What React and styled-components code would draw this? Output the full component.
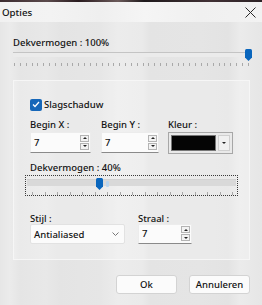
import React from 'react';
import styled, { createGlobalStyle } from 'styled-components';

const Global = createGlobalStyle`
  html, body { margin: 0; padding: 0; }
  body {
    width: 262px; height: 305px; overflow: hidden;
    font-family: "Noto Sans", "Open Sans", sans-serif;
    font-size: 9.5px; font-weight: 500; color: #111;
  }
  * { box-sizing: border-box; }
`;

const Window = styled.div`
  width: 262px; height: 305px;
  display: flex; flex-direction: column;
  background: linear-gradient(90deg,
    #e6e6e6 0px, #ebebeb 10px, #e5e5e5 20px, #e8e8e8 46px, #e4e4e4 60px,
    #e6e6e6 100px, #ececec 118px, #eaeaea 142px, #e4e4e4 150px,
    #e5e5e5 200px, #e3e3e3 228px, #ebebeb 240px, #e6e6e6 262px);
`;

const TopStrip = styled.div`
  height: 2px;
  background: linear-gradient(90deg, #3b2b2f 0, #5b4a4c 18%, #2a1c20 30%, #6b5a5a 45%, #1f1a1c 55%, #403034 80%, #2d2326 100%);
`;

const TitleBar = styled.div`
  height: 20px;
  display: flex; align-items: center; justify-content: space-between;
  padding: 0 6px 0 2px;
  background: linear-gradient(90deg, #f1f1f1 0, #f3f3f3 50px, #efefef 100px, #f5f5f5 145px, #f0f0f0 200px, #f2f2f2 262px);
  font-size: 9.7px; color: #111;
`;

const CloseIcon = styled.svg`
  width: 11px; height: 11px; display: block;
`;

const Body = styled.div`
  flex: 1;
  display: flex; flex-direction: column;
  padding: 0 12px 0 13px;
`;

const Label = styled.div`
  line-height: ${p => p.$lh || 14}px;
  height: ${p => p.$lh || 14}px;
  margin-top: ${p => p.$mt || 0}px;
  white-space: nowrap;
`;

const SliderBox = styled.div`
  position: relative;
  width: ${p => p.$w}px;
  height: ${p => p.$h}px;
  margin-left: ${p => p.$ml || 0}px;
  margin-top: ${p => p.$mt || 0}px;
  outline: ${p => (p.$focused ? '1px dotted #3a3a3a' : 'none')};
  outline-offset: -1px;
`;

const Groove = styled.div`
  position: absolute;
  left: ${p => p.$l}px; right: ${p => p.$r}px;
  top: ${p => p.$t}px; height: ${p => p.$h}px;
  background: ${p => p.$bg};
  border-top: 1px solid ${p => p.$line};
`;

const Ticks = styled.div`
  position: absolute;
  top: ${p => p.$t}px;
  display: flex; justify-content: space-between;
`;

const Tick = styled.span`
  width: 1px; height: 3px;
  background: #a9a9a9;
`;

const Thumb = styled.svg`
  position: absolute;
  width: 7px; height: 12px;
`;

const Ghost = styled.div`
  position: absolute;
  width: 3px; height: 6px;
  background: #bcd6ee;
  border-radius: 1px;
`;

function Slider({ width, height, value, min = 0, max = 100, ticks, from, to, tickTop, groove, thumbTop, focused, ml, mt, ghost }) {
  const x = from + ((to - from) * (value - min)) / (max - min);
  const marks = Array.from({ length: ticks });
  return (
    <SliderBox $w={width} $h={height} $focused={focused} $ml={ml} $mt={mt}>
      <Groove {...groove} />
      <Ticks $t={tickTop} style={{ left: from, width: to - from + 1 }}>
        {marks.map((_, i) => <Tick key={i} />)}
      </Ticks>
      {ghost && <Ghost style={{ left: x + 7, top: thumbTop + 3 }} />}
      <Thumb viewBox="0 0 7 12" style={{ left: x - 3, top: thumbTop }}>
        <path d="M0 1.5 Q0 0 1.5 0 H5.5 Q7 0 7 1.5 V8.5 L3.5 12 L0 8.5 Z" fill="#0a66bd" />
      </Thumb>
    </SliderBox>
  );
}

const GroupBox = styled.div`
  margin-top: 12px;
  width: 237px; height: 180px;
  border: 1px solid #f6f6f6;
  background: rgba(255,255,255,0.22);
  padding: 17px 0 0 16px;
  display: flex; flex-direction: column;
`;

const CheckRow = styled.label`
  display: flex; align-items: center; gap: 2px;
  height: 13px; line-height: 13px;
`;

const CheckBox = styled.span`
  width: 12px; height: 12px; border-radius: 2px;
  background: #1667b9;
  display: flex; align-items: center; justify-content: center;
`;

const Row = styled.div`
  display: flex;
  margin-top: ${p => p.$mt}px;
`;

const Field = styled.div`
  display: flex; flex-direction: column;
  width: ${p => p.$w}px;
`;

const TextBox = styled.div`
  width: ${p => p.$w}px; height: ${p => p.$h || 21}px;
  background: #fbfbfb;
  border: 1px solid #ececec;
  border-bottom: 1px solid #8a8a8a;
  display: flex; align-items: center; justify-content: space-between;
  padding: 0 1px 1px 3px;
`;

const SpinCol = styled.div`
  display: flex; flex-direction: column; gap: 1px;
`;

const SpinBtn = styled.span`
  width: 9px; height: 7px;
  border: 1px solid #b4b4b4;
  background: #f3f3f3;
  display: flex; align-items: center; justify-content: center;
  &::after {
    content: "";
    border-left: 2px solid transparent;
    border-right: 2px solid transparent;
    ${p => (p.$up ? 'border-bottom: 2px solid #222;' : 'border-top: 2px solid #222;')}
  }
`;

function Spin({ w, h, value }) {
  return (
    <TextBox $w={w} $h={h}>
      <span>{value}</span>
      <SpinCol>
        <SpinBtn $up />
        <SpinBtn />
      </SpinCol>
    </TextBox>
  );
}

const ColorPicker = styled.div`
  width: 65px; height: 22px;
  border: 1px solid #a7a7a7;
  background: #e9e9e9;
  display: flex; align-items: center;
  padding: 2px;
  gap: 2px;
`;

const Swatch = styled.div`
  width: 45px; height: 16px;
  background: #050505;
  border: 1px solid #777;
`;

const DropBtn = styled.div`
  width: 12px; height: 16px;
  background: #f0f0f0;
  border: 1px solid #cfcfcf;
  display: flex; align-items: center; justify-content: center;
  &::after {
    content: "";
    border-left: 2px solid transparent;
    border-right: 2px solid transparent;
    border-top: 2px solid #222;
  }
`;

const Combo = styled.div`
  width: 95px; height: 20px;
  background: #fbfbfb;
  border: 1px solid #e2e2e2;
  border-radius: 2px;
  display: flex; align-items: center; justify-content: space-between;
  padding: 0 5px 0 3px;
`;

const Chevron = styled.svg`
  width: 7px; height: 4px; display: block;
`;

const ButtonRow = styled.div`
  display: flex; justify-content: flex-end; gap: 12px;
  margin-top: 15px;
`;

const Button = styled.button`
  width: 61px; height: 19px;
  font: inherit; font-size: 9.5px; font-weight: 500; color: #111;
  background: #fbfbfb;
  border: 1px solid #d3d3d3;
  border-radius: 3px;
  padding: 0;
  line-height: 17px;
`;

export default function App() {
  return (
    <>
      <Global />
      <Window>
        <TopStrip />
        <TitleBar>
          <span>Opties</span>
          <CloseIcon viewBox="0 0 11 11">
            <path d="M0.5 0.5 L10.5 10.5 M10.5 0.5 L0.5 10.5" stroke="#2a2a2a" strokeWidth="1" />
          </CloseIcon>
        </TitleBar>
        <Body>
          <Label $mt={14}>Dekvermogen : 100%</Label>
          <Slider
            width={237} height={18} value={100} ticks={41} from={1} to={235}
            tickTop={13} thumbTop={-1}
            groove={{ $l: 0, $r: 0, $t: 2, $h: 5, $bg: '#ebebeb', $line: '#c4c4c4' }}
          />
          <GroupBox>
            <CheckRow>
              <CheckBox>
                <svg width="8" height="7" viewBox="0 0 8 7">
                  <path d="M1 3.5 L3 5.5 L7 1" stroke="#fff" strokeWidth="1.3" fill="none" />
                </svg>
              </CheckBox>
              <span>Slagschaduw</span>
            </CheckRow>
            <Row $mt={7}>
              <Field $w={71}>
                <Label>Begin X :</Label>
                <Spin w={61} value="7" />
              </Field>
              <Field $w={67}>
                <Label>Begin Y :</Label>
                <Spin w={58} value="7" />
              </Field>
              <Field $w={65}>
                <Label>Kleur :</Label>
                <ColorPicker>
                  <Swatch />
                  <DropBtn />
                </ColorPicker>
              </Field>
            </Row>
            <Label $mt={7}>Dekvermogen : 40%</Label>
            <Slider
              width={213} height={21} ml={-5} value={40} max={120} ticks={17} from={7} to={207}
              tickTop={17} thumbTop={3} focused ghost
              groove={{ $l: 2, $r: 2, $t: 4, $h: 7, $bg: '#d9d9d9', $line: '#d2d2d2' }}
            />
            <Row $mt={18}>
              <Field $w={108}>
                <Label $lh={10}>Stijl :</Label>
                <Combo>
                  <span>Antialiased</span>
                  <Chevron viewBox="0 0 7 4">
                    <path d="M0.5 0.5 L3.5 3.5 L6.5 0.5" stroke="#777" fill="none" />
                  </Chevron>
                </Combo>
              </Field>
              <Field $w={60}>
                <Label $lh={10}>Straal :</Label>
                <Spin w={54} h={20} value="7" />
              </Field>
            </Row>
          </GroupBox>
          <ButtonRow>
            <Button>Ok</Button>
            <Button>Annuleren</Button>
          </ButtonRow>
        </Body>
      </Window>
    </>
  );
}
